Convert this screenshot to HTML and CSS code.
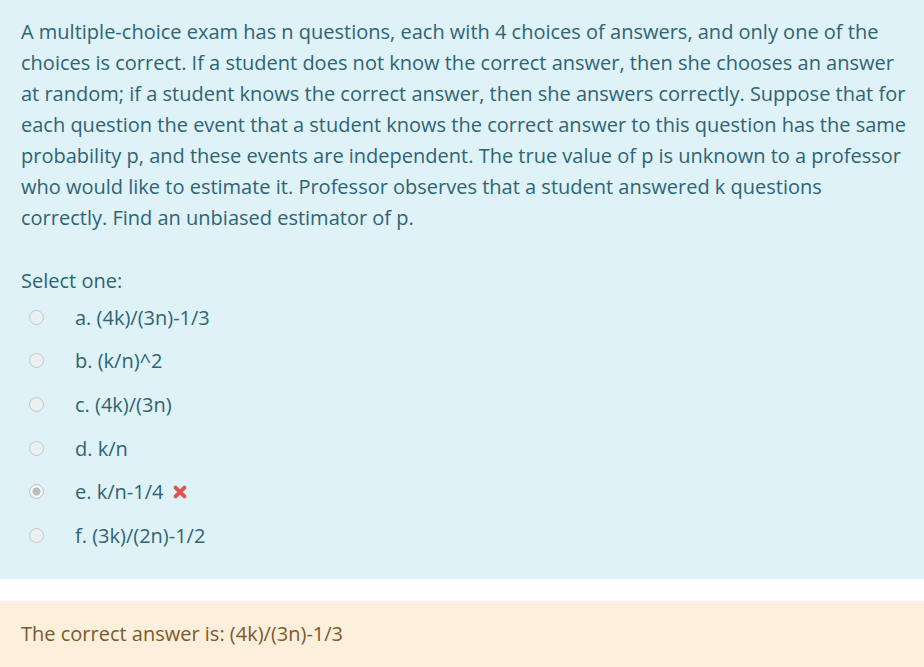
FILE: index.html
```html
<!DOCTYPE html>
<html>
<head>
<meta charset="utf-8">
<link rel="stylesheet" href="styles.css">
</head>
<body>
<div class="que">
  <div class="formulation">
    <p class="qtext">A multiple-choice exam has n questions, each with 4 choices of answers, and only one of the choices is correct. If a student does not know the correct answer, then she chooses an answer at random; if a student knows the correct answer, then she answers correctly. Suppose that for each question the event that a student knows the correct answer to this question has the same probability p, and these events are independent. The true value of p is unknown to a professor who would like to estimate it. Professor observes that a student answered k questions correctly. Find an unbiased estimator of p.</p>
    <div class="prompt">Select one:</div>
    <div class="answer">
      <div class="option"><span class="radio"></span><span class="label">a. (4k)/(3n)-1/3</span></div>
      <div class="option"><span class="radio"></span><span class="label">b. (k/n)^2</span></div>
      <div class="option"><span class="radio"></span><span class="label">c. (4k)/(3n)</span></div>
      <div class="option"><span class="radio"></span><span class="label">d. k/n</span></div>
      <div class="option"><span class="radio checked"></span><span class="label">e. k/n-1/4</span>
        <svg class="cross" viewBox="0 0 14 14" width="14" height="14"><path d="M2.6 2.6 L11.4 11.4 M11.4 2.6 L2.6 11.4" stroke="#e0524c" stroke-width="3.8" stroke-linecap="round"/></svg>
      </div>
      <div class="option"><span class="radio"></span><span class="label">f. (3k)/(2n)-1/2</span></div>
    </div>
  </div>
  <div class="outcome">The correct answer is: (4k)/(3n)-1/3</div>
</div>
</body>
</html>
```
FILE: styles.css
```css
html, body {
  margin: 0;
  padding: 0;
  background: #ffffff;
}
body {
  font-family: "Open Sans", "Noto Sans", sans-serif;
  font-size: 20px;
  line-height: 31px;
}
.formulation {
  background: #def2f8;
  color: #2f6473;
  padding: 15.5px 14px 22px 21px;
}
.qtext {
  margin: 0 0 32px 0;
}
.prompt {
  margin: 0;
}
.option {
  display: flex;
  align-items: center;
  padding: 6.3px 0;
}
.radio {
  box-sizing: border-box;
  width: 15px;
  height: 15px;
  border-radius: 50%;
  border: 1.5px solid #c3c7ca;
  background: #edf0f3;
  margin-left: 8px;
  margin-right: 31px;
  flex: none;
}
.radio.checked {
  border: 1.5px solid #bfc2c5;
  background: radial-gradient(circle, #bcbfc2 0 3.8px, #f2f4f6 4.3px);
}
.cross {
  margin-left: 10px;
}
.outcome {
  margin-top: 22px;
  background: #fcefdc;
  color: #7d5a29;
  padding: 17px 21px 20px 21px;
}
```
